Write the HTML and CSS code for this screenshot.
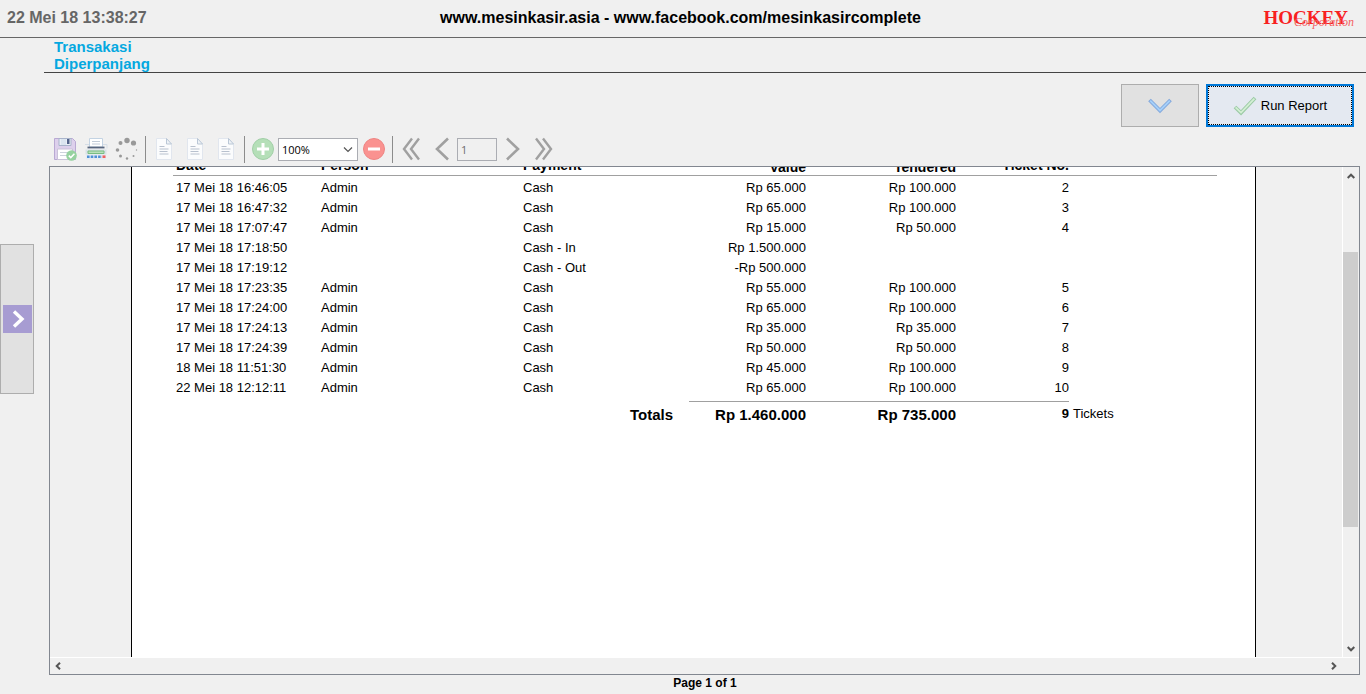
FILE: index.html
```html
<!DOCTYPE html>
<html lang="id">
<head>
<meta charset="utf-8">
<title>Transakasi Diperpanjang</title>
<link rel="stylesheet" href="styles.css">
</head>
<body>
<header class="topbar">
  <time class="clock">22 Mei 18 13:38:27</time>
  <p class="site">www.mesinkasir.asia - www.facebook.com/mesinkasircomplete</p>
  <div class="brand">HOCKEY<span class="brand-sub">Corporation</span></div>
</header>
<div class="body">
  <aside class="rail">
    <button class="rail-button" type="button" aria-label="Menu">
      <svg class="rail-icon" width="29" height="28" viewBox="0 0 29 28"><rect width="29" height="28" fill="#a79cd2"/><path d="M11 6.5l8 7.500-8 7.500" fill="none" stroke="#fff" stroke-width="3.400"/></svg>
    </button>
  </aside>
  <main class="main">
    <h1 class="title">Transakasi<br>Diperpanjang</h1>
    <div class="actions">
      <button class="action" type="button" aria-label="Filter">
        <svg width="24" height="16" viewBox="0 0 24 16"><path d="M1.500 2l10.500 10.500L22.500 2" fill="none" stroke="#84a9dc" stroke-width="3.800"/><path d="M2.200 2.600l9.800 9.900 9.800-9.900" fill="none" stroke="#a5d0fa" stroke-width="1.800"/></svg>
      </button>
      <button class="action action-run" type="button">
        <svg width="24" height="20" viewBox="0 0 24 20"><path d="M2 11l6 5.800L22 2" fill="none" stroke="#9bcaa5" stroke-width="3.800"/><path d="M2.600 11.400l5.400 5.200L21.400 2.600" fill="none" stroke="#d3efd4" stroke-width="1.800"/></svg>
        Run Report
      </button>
    </div>
    <div class="toolbar">
      <button class="tool" type="button" aria-label="Save">
        <svg width="24" height="24" viewBox="0 0 24 24"><path d="M1.500 1.500h18l3 3V22.500h-21z" fill="#ddd0ec" stroke="#b9a9d3"/><path d="M6 1.500h12v7H6z" fill="#e9eff6" stroke="#a9b4cb"/><path d="M8 2h5v6H8z" fill="#dbe5f0"/><path d="M14 2h2.500v5H14z" fill="#53638b"/><path d="M4.500 12h15v10.500h-15z" fill="#fff" stroke="#c9c2d8"/><path d="M7 15.500h10M7 18.500h8" stroke="#ccd3dc"/><circle cx="18.500" cy="18.500" r="5.300" fill="#96d2a0"/><path d="M15.800 18.600l2 2 3.600-3.800" fill="none" stroke="#fff" stroke-width="1.500"/></svg>
      </button>
      <button class="tool" type="button" aria-label="Print">
        <svg width="24" height="24" viewBox="0 0 24 24"><path d="M5.500 1.500h13V10h-13z" fill="#fff" stroke="#c3d3e3"/><path d="M8 4.500h8M8 7h8" stroke="#c2ccd8"/><path d="M1 7.500h4M19 7.500h4v4" fill="none" stroke="#d5dde6"/><path d="M3.500 10.500h17" stroke="#58667e" stroke-width="1.800"/><path d="M1.500 12.500h21v5h-21z" fill="#d9e2e8"/><path d="M4 14h16v2.500H4z" fill="#b9e0ba" stroke="#78bd83"/><path d="M2 17.500h20v5H2z" fill="#e5ebf3"/><path d="M3 19.700h15" stroke="#4e91d6" stroke-width="2.600" stroke-dasharray="2.600 1.100"/><path d="M18.500 19.700h3" stroke="#ee6262" stroke-width="2.600"/></svg>
      </button>
      <button class="tool" type="button" aria-label="Loading">
        <svg width="24" height="24" viewBox="0 0 24 24" fill="#999"><circle cx="12" cy="3.500" r="2.700"/><circle cx="18.500" cy="6" r="2.600"/><circle cx="5.500" cy="6" r="2"/><circle cx="2.500" cy="13" r="1.800"/><circle cx="5.500" cy="19" r="1.500"/><circle cx="12" cy="21.500" r="1.200"/><circle cx="18.500" cy="19" r="1"/><circle cx="21.500" cy="13" r=".7"/></svg>
      </button>
      <span class="separator"></span>
      <button class="tool" type="button" aria-label="Actual size">
        <svg width="18" height="24" viewBox="0 0 18 24"><path d="M1.500 1.500h10l5 5.500v15.500h-15z" fill="#fbfcfd" stroke="#e1e6ee"/><path d="M11.500 1.500V7h5z" fill="#eef2f6" stroke="#bac7d6"/><path d="M4.500 9.500h5M4.500 12h9M4.500 14.500h8M4.500 17h9" stroke="#b8c1ce"/></svg>
      </button>
      <button class="tool" type="button" aria-label="Fit page">
        <svg width="18" height="24" viewBox="0 0 18 24"><path d="M1.500 1.500h10l5 5.500v15.500h-15z" fill="#fbfcfd" stroke="#e1e6ee"/><path d="M11.500 1.500V7h5z" fill="#eef2f6" stroke="#bac7d6"/><path d="M4.500 9.500h5M4.500 12h9M4.500 14.500h8M4.500 17h9" stroke="#b8c1ce"/></svg>
      </button>
      <button class="tool" type="button" aria-label="Fit width">
        <svg width="18" height="24" viewBox="0 0 18 24"><path d="M1.500 1.500h10l5 5.500v15.500h-15z" fill="#fbfcfd" stroke="#e1e6ee"/><path d="M11.500 1.500V7h5z" fill="#eef2f6" stroke="#bac7d6"/><path d="M4.500 9.500h5M4.500 12h9M4.500 14.500h8M4.500 17h9" stroke="#b8c1ce"/></svg>
      </button>
      <span class="separator"></span>
      <button class="tool" type="button" aria-label="Zoom in">
        <svg width="24" height="24" viewBox="0 0 24 24"><circle cx="12" cy="12" r="10.500" fill="#b5dfb8" stroke="#a1cfa7"/><path d="M6 12h12M12 6v12" stroke="#fff" stroke-width="3"/></svg>
      </button>
      <span class="zoom">
        <select class="zoom-select" aria-label="Zoom"><option>100%</option></select>
        <svg class="zoom-arrow" width="10" height="6" viewBox="0 0 10 6"><path d="M1 .5l4 4 4-4" fill="none" stroke="#555" stroke-width="1.200"/></svg>
      </span>
      <button class="tool" type="button" aria-label="Zoom out">
        <svg width="24" height="24" viewBox="0 0 24 24"><circle cx="12" cy="12" r="10.500" fill="#fa9290" stroke="#ee8583"/><path d="M6 12h12" stroke="#fff" stroke-width="3"/></svg>
      </button>
      <span class="separator"></span>
      <button class="tool" type="button" aria-label="First page">
        <svg width="20" height="24" viewBox="0 0 20 24"><path d="M11 1.500L3 12l8 10.500M18 1.500L10 12l8 10.500" fill="none" stroke="#a0a0a0" stroke-width="2.400"/></svg>
      </button>
      <button class="tool" type="button" aria-label="Previous page">
        <svg width="16" height="24" viewBox="0 0 16 24"><path d="M14 1.500L3 12l11 10.500" fill="none" stroke="#a0a0a0" stroke-width="2.600"/></svg>
      </button>
      <input class="page-input" type="text" value="1" aria-label="Page" disabled>
      <button class="tool" type="button" aria-label="Next page">
        <svg width="16" height="24" viewBox="0 0 16 24"><path d="M2 1.500L13 12 2 22.500" fill="none" stroke="#a0a0a0" stroke-width="2.600"/></svg>
      </button>
      <button class="tool" type="button" aria-label="Last page">
        <svg width="20" height="24" viewBox="0 0 20 24"><path d="M9 1.500L17 12 9 22.500M2 1.500L10 12 2 22.500" fill="none" stroke="#a0a0a0" stroke-width="2.400"/></svg>
      </button>
    </div>
    <section class="viewer">
      <div class="canvas">
        <div class="paper">
          <table class="report">
            <colgroup><col class="c-date"><col class="c-person"><col class="c-payment"><col class="c-label"><col class="c-value"><col class="c-tendered"><col class="c-ticket"><col></colgroup>
            <thead>
              <tr><th>Date</th><th>Person</th><th>Payment</th><th></th><th class="num low">Value</th><th class="num low">Tendered</th><th class="ticket">Ticket No.</th><th></th></tr>
            </thead>
            <tbody>
              <tr><td>17 Mei 18 16:46:05</td><td>Admin</td><td colspan="2">Cash</td><td class="num">Rp 65.000</td><td class="num">Rp 100.000</td><td class="ticket">2</td><td></td></tr>
              <tr><td>17 Mei 18 16:47:32</td><td>Admin</td><td colspan="2">Cash</td><td class="num">Rp 65.000</td><td class="num">Rp 100.000</td><td class="ticket">3</td><td></td></tr>
              <tr><td>17 Mei 18 17:07:47</td><td>Admin</td><td colspan="2">Cash</td><td class="num">Rp 15.000</td><td class="num">Rp 50.000</td><td class="ticket">4</td><td></td></tr>
              <tr><td>17 Mei 18 17:18:50</td><td></td><td colspan="2">Cash - In</td><td class="num">Rp 1.500.000</td><td></td><td></td><td></td></tr>
              <tr><td>17 Mei 18 17:19:12</td><td></td><td colspan="2">Cash - Out</td><td class="num">-Rp 500.000</td><td></td><td></td><td></td></tr>
              <tr><td>17 Mei 18 17:23:35</td><td>Admin</td><td colspan="2">Cash</td><td class="num">Rp 55.000</td><td class="num">Rp 100.000</td><td class="ticket">5</td><td></td></tr>
              <tr><td>17 Mei 18 17:24:00</td><td>Admin</td><td colspan="2">Cash</td><td class="num">Rp 65.000</td><td class="num">Rp 100.000</td><td class="ticket">6</td><td></td></tr>
              <tr><td>17 Mei 18 17:24:13</td><td>Admin</td><td colspan="2">Cash</td><td class="num">Rp 35.000</td><td class="num">Rp 35.000</td><td class="ticket">7</td><td></td></tr>
              <tr><td>17 Mei 18 17:24:39</td><td>Admin</td><td colspan="2">Cash</td><td class="num">Rp 50.000</td><td class="num">Rp 50.000</td><td class="ticket">8</td><td></td></tr>
              <tr><td>18 Mei 18 11:51:30</td><td>Admin</td><td colspan="2">Cash</td><td class="num">Rp 45.000</td><td class="num">Rp 100.000</td><td class="ticket">9</td><td></td></tr>
              <tr><td>22 Mei 18 12:12:11</td><td>Admin</td><td colspan="2">Cash</td><td class="num">Rp 65.000</td><td class="num">Rp 100.000</td><td class="ticket">10</td><td></td></tr>
            </tbody>
            <tfoot>
              <tr><td colspan="3"></td><td class="total">Totals</td><td class="num total ruled">Rp 1.460.000</td><td class="num total ruled">Rp 735.000</td><td class="ticket count ruled">9</td><td class="unit">Tickets</td></tr>
            </tfoot>
          </table>
        </div>
      </div>
      <div class="vbar">
        <button class="arrow" type="button" aria-label="Scroll up"><svg width="8" height="6" viewBox="0 0 8 6"><path d="M.7 5L4 1.700 7.300 5" fill="none" stroke="#555" stroke-width="2"/></svg></button>
        <div class="track"><div class="thumb"></div></div>
        <button class="arrow" type="button" aria-label="Scroll down"><svg width="8" height="6" viewBox="0 0 8 6"><path d="M.7 1L4 4.300 7.300 1" fill="none" stroke="#555" stroke-width="2"/></svg></button>
      </div>
      <div class="hbar">
        <button class="arrow" type="button" aria-label="Scroll left"><svg width="6" height="8" viewBox="0 0 6 8"><path d="M5 .7L1.700 4 5 7.300" fill="none" stroke="#555" stroke-width="2"/></svg></button>
        <button class="arrow" type="button" aria-label="Scroll right"><svg width="6" height="8" viewBox="0 0 6 8"><path d="M1 .7L4.300 4 1 7.300" fill="none" stroke="#555" stroke-width="2"/></svg></button>
      </div>
    </section>
    <p class="page-status">Page 1 of 1</p>
  </main>
</div>
</body>
</html>
```

FILE: styles.css
```css
* { box-sizing: border-box; }

body {
  display: flex;
  flex-direction: column;
  height: 100vh;
  margin: 0;
  overflow: hidden;
  background: #f0f0f0;
  color: #000;
  font-family: "Liberation Sans", Arial, sans-serif;
  font-size: 13px;
}

button, select, input { margin: 0; padding: 0; font: inherit; color: inherit; }
svg { display: block; flex: none; }

.topbar {
  display: grid;
  grid-template-columns: 1fr auto 1fr;
  align-items: center;
  flex: none;
  padding: 9px 12px 10px;
  padding-left: 7px;
  border-bottom: 1px solid #666;
  font-size: 16px;
  font-weight: bold;
  line-height: 18px;
}
.clock { color: #666; }
.site { margin: 0; }
.brand {
  position: relative;
  justify-self: end;
  padding-right: 6px;
  color: #f8201f;
  font-family: "Liberation Serif", "Times New Roman", serif;
  font-size: 19px;
  line-height: 10px;
}
.brand-sub {
  position: absolute;
  right: 0;
  top: 4px;
  color: #f4605f;
  font-size: 12px;
  font-style: italic;
  font-weight: normal;
}

.body { display: flex; flex: 1; min-height: 0; }
.rail { flex: none; width: 44px; padding-top: 206px; }
.rail-button {
  display: flex;
  align-items: center;
  justify-content: center;
  width: 34px;
  height: 150px;
  border: 1px solid #adadad;
  background: #e1e1e1;
}

.main { display: flex; flex: 1; flex-direction: column; min-width: 0; }
.title {
  flex: none;
  margin: 0;
  padding-left: 10px;
  border-bottom: 1px solid #444;
  color: #05a8e0;
  font-size: 15px;
  line-height: 17px;
}

.actions { display: flex; flex: none; justify-content: flex-end; gap: 7px; padding: 11px 12px 0 0; }
.action {
  display: flex;
  align-items: center;
  justify-content: center;
  gap: 4px;
  width: 78px;
  height: 43px;
  border: 1px solid #adadad;
  background: #e1e1e1;
}
.action-run {
  width: 148px;
  border: 2px solid #0078d7;
  background: #e4e9f1;
  outline: 1px dotted #000;
  outline-offset: -3px;
}

.toolbar { display: flex; flex: none; align-items: center; height: 39px; padding: 5px 0 0 5px; }
.tool {
  display: flex;
  align-items: center;
  justify-content: center;
  width: 31px;
  height: 26px;
  border: 0;
  background: none;
}
.separator { width: 1px; height: 27px; margin: 0 2px 0 3px; background: #8c8c8c; }
.zoom { position: relative; }
.zoom-select, .page-input {
  display: block;
  height: 23px;
  border: 1px solid #abadb3;
  border-radius: 0;
  font-family: "Open Sans", Tahoma, sans-serif;
  font-size: 11px;
}
.zoom-select { width: 80px; padding-left: 3px; appearance: none; background: #fff; }
.zoom-arrow { position: absolute; right: 5px; top: 9px; pointer-events: none; }
.page-input { width: 40px; padding-left: 3px; background: #f0f0f0; color: #6d6d6d; }

.viewer {
  display: grid;
  grid-template-columns: minmax(0, 1fr) 17px;
  grid-template-rows: minmax(0, 1fr) 17px;
  flex: 1;
  min-height: 0;
  margin: 0 6px 0 5px;
  border: 1px solid #828790;
}
.canvas { display: flex; overflow: hidden; padding: 0 86px 0 81px; }
.paper { flex: 1; overflow: hidden; border: solid #000; border-width: 0 1px; background: #fff; }

/* The sheet is scrolled so that only the foot of the heading row shows. */
.report {
  width: calc(100% - 79px);
  margin: -12px 38px 0 41px;
  border-spacing: 0;
  table-layout: fixed;
  line-height: 17px;
}
.c-date { width: 145px; }
.c-person { width: 202px; }
.c-payment { width: 107px; }
.c-label { width: 62px; }
.c-value { width: 120px; }
.c-tendered { width: 150px; }
.c-ticket { width: 110px; }
.report th, .report td { padding: 3px 3px 0; text-align: left; white-space: nowrap; }
.report th {
  height: 21px;
  padding: 0 3px 3px;
  border-bottom: 1px solid #a0a0a0;
  font-size: 14px;
  line-height: 14px;
  vertical-align: bottom;
}
.report th.low { padding-bottom: 1px; }
.report .num { text-align: right; }
.report .ticket { padding-right: 0; text-align: right; }
.report tbody tr:last-child td { padding-bottom: 5px; }
.report tfoot td { padding-top: 3px; border-top: 1px solid transparent; vertical-align: top; }
.report tfoot .total { padding-top: 4px; font-size: 15px; font-weight: bold; }
.report tfoot .ruled { border-top-color: #a0a0a0; }
.report .count { font-weight: bold; }
.report .unit { padding-left: 4px; }

.vbar { display: flex; flex-direction: column; border-left: 1px solid #fff; }
.hbar { display: flex; justify-content: space-between; padding-right: 17px; border-top: 1px solid #fff; grid-column: 1 / -1; }
.arrow {
  display: flex;
  align-items: center;
  justify-content: center;
  width: 16px;
  height: 17px;
  border: 0;
  background: none;
}
.hbar .arrow { height: 16px; }
.track { flex: 1; padding-top: 68px; }
.track { display: flex; flex-direction: column; }
.thumb { width: 15px; height: 71%; background: #cdcdcd; }

.page-status {
  flex: none;
  margin: 0;
  padding-bottom: 3px;
  font-size: 12px;
  font-weight: bold;
  line-height: 16px;
  text-align: center;
}
```
